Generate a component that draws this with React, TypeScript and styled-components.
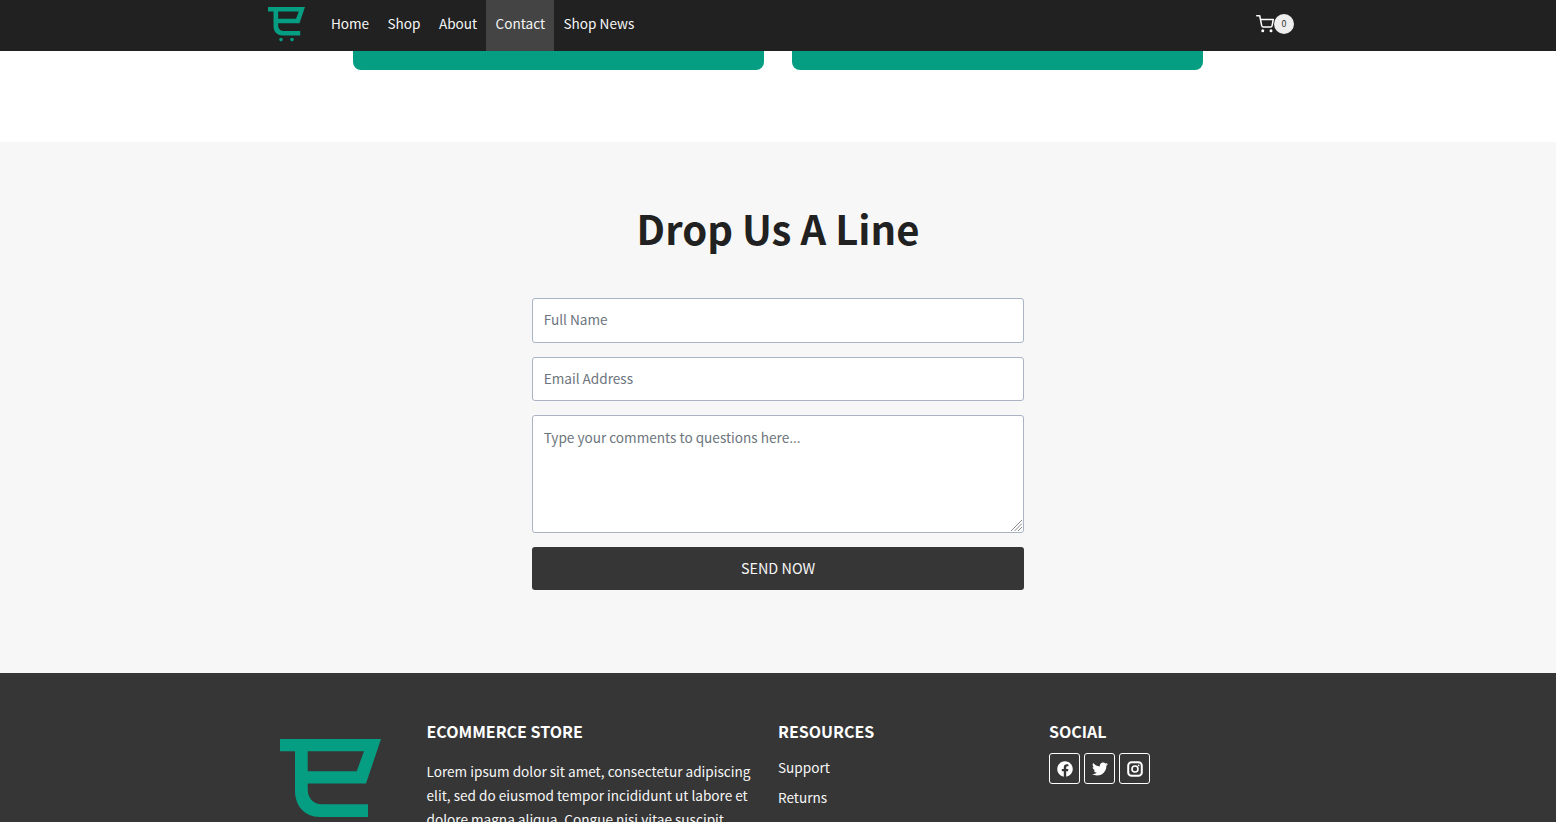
import * as React from "react";
import styled, { createGlobalStyle } from "styled-components";
import { FiShoppingCart } from "react-icons/fi";
import { FaFacebook, FaTwitter } from "react-icons/fa";

const FONT = `"Noto Sans CJK JP", "Noto Sans", sans-serif`;

const GlobalStyle = createGlobalStyle`
	html, body {
		margin: 0;
		padding: 0;
		height: 822px;
		overflow: hidden;
		background: #fff;
		font-family: ${FONT};
	}
	* {
		box-sizing: border-box;
	}
`;

const Page = styled.div`
	height: 822px;
	overflow: hidden;
`;

const Navbar = styled.header`
	height: 51px;
	background: #212121;
	display: flex;
	padding-left: 268px;
	padding-right: 262px;
	align-items: stretch;
`;

const NavLogo = styled.svg`
	width: 37px;
	height: 36.6px;
	margin-top: 6.7px;
	margin-right: 16.7px;
`;

const NavList = styled.nav`
	display: flex;
	flex: 1;
`;

const NavLink = styled.a<{ $active?: boolean }>`
	display: flex;
	align-items: center;
	padding: 0 9.2px 6px;
	font-size: 13.6px;
	color: #f6f6f6;
	background: ${(p) => (p.$active ? "#444444" : "transparent")};
`;

const CartBox = styled.div`
	display: flex;
	align-items: center;
	color: #fff;
	padding-bottom: 4px;
`;

const CartBadge = styled.span`
	width: 20px;
	height: 20px;
	border-radius: 50%;
	background: #eeeeee;
	color: #333;
	font-size: 9px;
	display: flex;
	align-items: center;
	justify-content: center;
`;

const CardStrip = styled.section`
	height: 91px;
	display: flex;
	justify-content: center;
	gap: 28px;
	background: #fff;
`;

const CardBottom = styled.div`
	width: 411px;
	height: 19px;
	background: #059e82;
	border-radius: 0 0 8px 8px;
`;

const ContactSection = styled.section`
	height: 531px;
	background: #f7f7f7;
	display: flex;
	flex-direction: column;
	align-items: center;
	padding-top: 56px;
`;

const Heading = styled.h2`
	margin: 0 0 40px;
	font-size: 40px;
	line-height: 60px;
	font-weight: 700;
	color: #212121;
`;

const Form = styled.form`
	width: 492px;
	display: flex;
	flex-direction: column;
	gap: 14px;
`;

const Input = styled.input<{ $h: number }>`
	height: ${(p) => p.$h}px;
	border: 1px solid #a9b4c4;
	border-radius: 3px;
	background: #fff;
	padding: 0 11px ${(p) => p.$h - 42}px 10.7px;
	font-family: ${FONT};
	font-size: 13.6px;
	color: #333;
	outline: none;
	&::placeholder {
		color: #6c757d;
		opacity: 1;
	}
`;

const TextAreaWrap = styled.div`
	position: relative;
	height: 118px;
`;

const TextArea = styled.textarea`
	width: 100%;
	height: 118px;
	border: 1px solid #a9b4c4;
	border-radius: 3px;
	background: #fff;
	padding: 10px 11px 10px 10.7px;
	font-family: ${FONT};
	font-size: 13.6px;
	line-height: 22px;
	color: #333;
	outline: none;
	display: block;
	resize: none;
	&::placeholder {
		color: #6c757d;
		opacity: 1;
	}
`;

const ResizeHandle = styled.svg`
	position: absolute;
	right: 2px;
	bottom: 2px;
	width: 11px;
	height: 11px;
`;

const SendButton = styled.button`
	height: 43px;
	border: none;
	border-radius: 3px;
	background: #363636;
	color: #f6f6f6;
	font-family: ${FONT};
	font-size: 14.4px;
	padding: 0 0 2px;
	text-transform: uppercase;
`;

const Footer = styled.footer`
	height: 149px;
	background: #363636;
	overflow: hidden;
	display: grid;
	grid-template-columns: 146.5px 351.5px 271px 200px;
	padding: 46px 0 0 280px;
	color: #f6f6f6;
`;

const FooterLogo = styled.svg`
	width: 101px;
	height: 80px;
	margin-top: 19.7px;
`;

const FooterTitle = styled.h4`
	margin: 0 0 16px;
	font-size: 16px;
	line-height: 24px;
	font-weight: 700;
	color: #fff;
	text-transform: uppercase;
`;

const FooterText = styled.p`
	margin: 0;
	width: 330px;
	font-size: 13.6px;
	line-height: 24px;
`;

const FooterLinks = styled.div`
	display: flex;
	flex-direction: column;
	gap: 8px;
	margin-top: -3px;
`;

const FooterLink = styled.a`
	font-size: 13.6px;
	line-height: 22px;
`;

const SocialRow = styled.div`
	display: flex;
	gap: 4px;
	margin-top: -6px;
`;

const SocialButton = styled.a`
	width: 31px;
	height: 31px;
	border: 1px solid #fff;
	border-radius: 3px;
	color: #fff;
	display: flex;
	align-items: center;
	justify-content: center;
	font-size: 16px;
`;

const LogoMark = () => (
	<path
		fillRule="evenodd"
		d="M0 0H101L86 44.6H27.7V50C27.7 59 33 65.3 42 65.3H88V78H40C24 78 15 66 15 52V12.3H0ZM27.7 12.3V32.3H76.7L84 12.3Z"
		fill="#059e82"
	/>
);

const InstagramMark = () => (
	<svg width="16" height="16" viewBox="0 0 16 16" fill="none" stroke="currentColor">
		<rect x="1.2" y="1.2" width="13.6" height="13.6" rx="3.4" strokeWidth="2" />
		<circle cx="8" cy="8" r="3" strokeWidth="1.6" />
		<circle cx="11.6" cy="4.4" r="0.9" fill="currentColor" stroke="none" />
	</svg>
);

export default function App() {
	return (
		<Page>
			<GlobalStyle />
			<Navbar>
				<NavLogo viewBox="0 0 101 100">
					<LogoMark />
					<circle cx="35.5" cy="89" r="5" fill="#059e82" />
					<circle cx="65.5" cy="89" r="5" fill="#059e82" />
				</NavLogo>
				<NavList>
					<NavLink>Home</NavLink>
					<NavLink>Shop</NavLink>
					<NavLink>About</NavLink>
					<NavLink $active>Contact</NavLink>
					<NavLink>Shop News</NavLink>
				</NavList>
				<CartBox>
					<FiShoppingCart size={18} />
					<CartBadge>0</CartBadge>
				</CartBox>
			</Navbar>
			<CardStrip>
				<CardBottom />
				<CardBottom />
			</CardStrip>
			<ContactSection>
				<Heading>Drop Us A Line</Heading>
				<Form>
					<Input $h={45} placeholder="Full Name" />
					<Input $h={44} placeholder="Email Address" />
					<TextAreaWrap>
						<TextArea placeholder="Type your comments to questions here..." />
						<ResizeHandle viewBox="0 0 11 11" stroke="#8a8a8a" strokeWidth="1">
							<path d="M0 11L11 0M3.5 11L11 3.5M7 11L11 7" />
						</ResizeHandle>
					</TextAreaWrap>
					<SendButton type="button">Send Now</SendButton>
				</Form>
			</ContactSection>
			<Footer>
				<FooterLogo viewBox="0 0 101 80">
					<LogoMark />
				</FooterLogo>
				<div>
					<FooterTitle>Ecommerce Store</FooterTitle>
					<FooterText>
						Lorem ipsum dolor sit amet, consectetur adipiscing elit, sed do eiusmod tempor incididunt ut labore et dolore magna aliqua. Congue nisi vitae suscipit.
					</FooterText>
				</div>
				<div>
					<FooterTitle>Resources</FooterTitle>
					<FooterLinks>
						<FooterLink>Support</FooterLink>
						<FooterLink>Returns</FooterLink>
					</FooterLinks>
				</div>
				<div>
					<FooterTitle>Social</FooterTitle>
					<SocialRow>
						<SocialButton><FaFacebook /></SocialButton>
						<SocialButton><FaTwitter /></SocialButton>
						<SocialButton><InstagramMark /></SocialButton>
					</SocialRow>
				</div>
			</Footer>
		</Page>
	);
}
